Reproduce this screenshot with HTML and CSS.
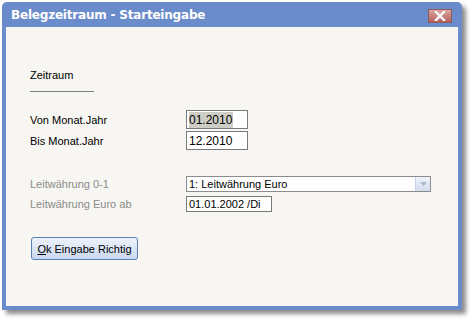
FILE: index.html
```html
<!DOCTYPE html>
<html>
<head>
<meta charset="utf-8">
<link rel="stylesheet" href="styles.css">
</head>
<body>
<div class="window">
  <div class="titlebar">
    <span class="title">Belegzeitraum - Starteingabe</span>
    <span class="close">
      <svg width="14" height="10" viewBox="0 0 14 10"><path d="M3 1 L11 9 M11 1 L3 9" stroke="#fff" stroke-width="2.4" stroke-linecap="square"/></svg>
    </span>
  </div>
  <div class="body">
    <div class="section">Zeitraum</div>
    <div class="rule"></div>
    <div class="row r1">
      <span class="label">Von Monat.Jahr</span>
      <span class="input short"><span class="sel">01.2010</span></span>
    </div>
    <div class="row r2">
      <span class="label">Bis Monat.Jahr</span>
      <span class="input short">12.2010</span>
    </div>
    <div class="row r3">
      <span class="label gray">Leitwährung 0-1</span>
      <span class="input combo"><span class="ctext">1: Leitwährung Euro</span><span class="arrow"><svg width="7" height="4" viewBox="0 0 7 4"><path d="M0 0 H7 L3.5 4Z" fill="#a9b8cc"/></svg></span></span>
    </div>
    <div class="row r4">
      <span class="label gray">Leitwährung Euro ab</span>
      <span class="input date">01.01.2002 /Di</span>
    </div>
    <div class="btnrow">
      <span class="button"><u>O</u>k Eingabe Richtig</span>
    </div>
  </div>
</div>
</body>
</html>
```
FILE: styles.css
```css
html, body {
  margin: 0;
  padding: 0;
  background: #ffffff;
}
body {
  width: 476px;
  height: 325px;
  overflow: hidden;
  font-family: Tahoma, "DejaVu Sans", "Liberation Sans", sans-serif;
}
.window {
  margin: 2px 0 0 2px;
  width: 460px;
  height: 308px;
  box-sizing: border-box;
  background: #6b8ccb;
  border-radius: 5px 5px 0 0;
  padding: 0 4px 4px 4px;
  box-shadow: 4px 4px 4px rgba(0,0,0,0.45);
  display: flex;
  flex-direction: column;
}
.titlebar {
  height: 25px;
  display: flex;
  align-items: center;
  justify-content: space-between;
  padding: 0 6px 0 5px;
}
.title {
  color: #ffffff;
  font-family: "DejaVu Sans", sans-serif;
  font-weight: bold;
  font-size: 12px;
  letter-spacing: -0.2px;
}
.close {
  width: 24px;
  height: 14px;
  box-sizing: border-box;
  border: 1px solid #8e5a5a;
  background: linear-gradient(#d9a4a0, #b8615c);
  display: flex;
  align-items: center;
  justify-content: center;
  margin-top: 2px;
}
.body {
  flex: 1;
  background: #f7f6f2;
  padding: 40px 0 0 24px;
  font-family: "Liberation Sans", sans-serif;
  font-size: 11px;
  color: #000;
}
.section {
  height: 16px;
  line-height: 16px;
}
.rule {
  width: 64px;
  height: 1px;
  background: #808080;
  margin-top: 8px;
}
.row {
  display: flex;
  align-items: center;
}
.r1 { margin-top: 18px; }
.r2 { margin-top: 2px; }
.r3 { margin-top: 26px; }
.r4 { margin-top: 4px; }
.label {
  width: 156px;
  flex: none;
}
.gray { color: #8a8a8a; }
.input {
  box-sizing: border-box;
  border: 1px solid #7a7a7a;
  background: #fff;
  display: flex;
  align-items: center;
  padding-left: 2px;
  font-size: 12px;
}
.short {
  width: 62px;
  height: 19px;
}
.sel {
  background: #cdcdc5;
  padding: 1px 1px 1px 0;
}
.combo {
  width: 245px;
  height: 16px;
  font-size: 11px;
  justify-content: space-between;
  padding-right: 0;
  border-color: #8c8c8c;
}
.arrow {
  width: 14px;
  height: 14px;
  background: linear-gradient(#eef3fb, #d4deef);
  border-left: 1px solid #c7d3e6;
  display: flex;
  align-items: center;
  justify-content: center;
}
.date {
  width: 86px;
  height: 16px;
  font-size: 11px;
}
.btnrow {
  margin-top: 25px;
  padding-left: 1px;
}
.button {
  display: inline-flex;
  align-items: center;
  justify-content: center;
  width: 107px;
  height: 23px;
  box-sizing: border-box;
  border: 1px solid #5c7fb8;
  border-radius: 3px;
  background: linear-gradient(#edf2fa, #c9d8ef);
  font-size: 11px;
}
.button u { text-decoration: underline; }
```
